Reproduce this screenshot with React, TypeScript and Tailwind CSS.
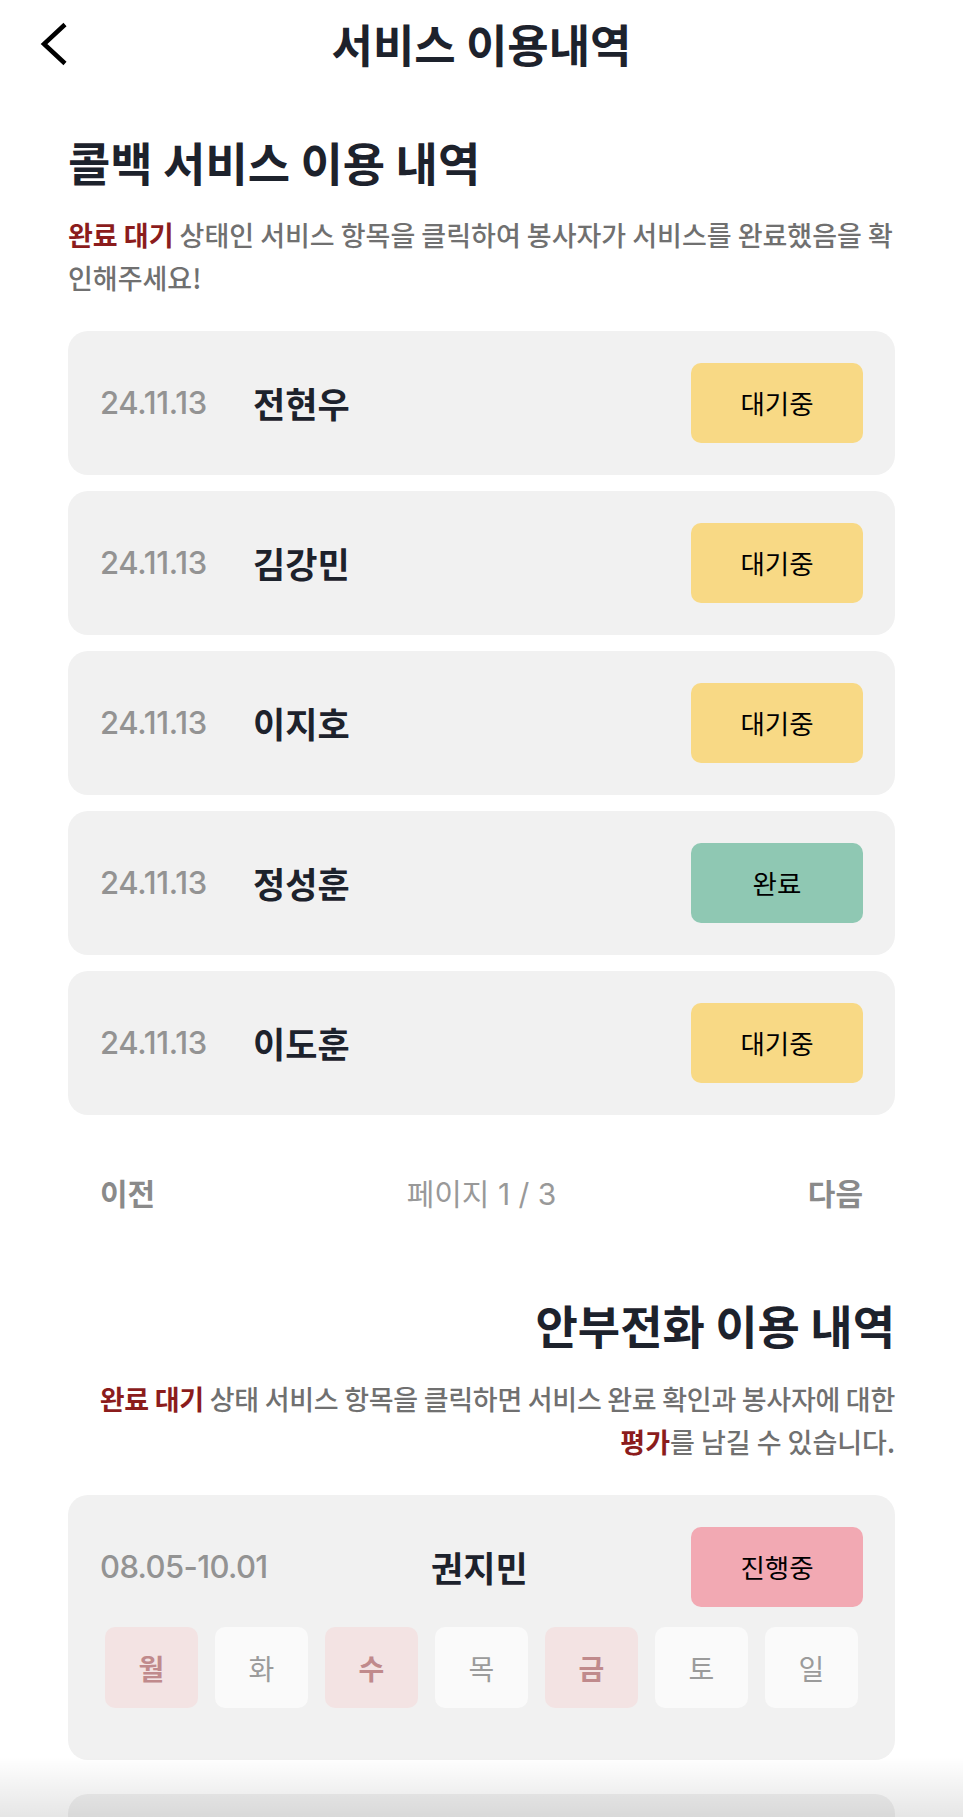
import React from "react";

type Item = { date: string; name: string; status: "wait" | "done" };

const items: Item[] = [
  { date: "24.11.13", name: "전현우", status: "wait" },
  { date: "24.11.13", name: "김강민", status: "wait" },
  { date: "24.11.13", name: "이지호", status: "wait" },
  { date: "24.11.13", name: "정성훈", status: "done" },
  { date: "24.11.13", name: "이도훈", status: "wait" },
];

const days = [
  { d: "월", on: true },
  { d: "화", on: false },
  { d: "수", on: true },
  { d: "목", on: false },
  { d: "금", on: true },
  { d: "토", on: false },
  { d: "일", on: false },
];

function CallbackCard({ item }: { item: Item }) {
  return (
    <li className="flex h-[144px] items-center rounded-[20px] bg-[#f1f1f1] pl-8 pr-8">
      <span className="w-[153px] font-['Inter','Noto_Sans_CJK_KR',sans-serif] text-[31px] font-medium tracking-[-0.01em] text-[#939393]">
        {item.date}
      </span>
      <span className="text-[35px] font-bold text-[#1d222c]">{item.name}</span>
      {item.status === "wait" ? (
        <span className="ml-auto flex h-20 w-[172px] items-center justify-center rounded-[10px] bg-[#f8d985] text-[26.5px] text-black">
          대기중
        </span>
      ) : (
        <span className="ml-auto flex h-20 w-[172px] items-center justify-center rounded-[10px] bg-[#8fc8b3] text-[26.5px] text-black">
          완료
        </span>
      )}
    </li>
  );
}

function CareCard() {
  return (
    <div className="rounded-[20px] bg-[#f1f1f1] px-8 pb-[52px] pt-8">
      <div className="flex h-20 items-center justify-between">
        <span className="font-['Inter','Noto_Sans_CJK_KR',sans-serif] text-[31px] font-medium tracking-[-0.02em] text-[#939393]">
          08.05-10.01
        </span>
        <span className="text-[35px] font-bold text-[#1d222c]">권지민</span>
        <span className="flex h-20 w-[172px] items-center justify-center rounded-[10px] bg-[#f2a9b3] text-[26.5px] text-black">
          진행중
        </span>
      </div>
      <div className="mt-5 grid h-[81px] grid-cols-7 gap-[17px] px-[5px]">
        {days.map((x) =>
          x.on ? (
            <span
              key={x.d}
              className="flex items-center justify-center rounded-[10px] bg-[#f3e3e3] text-[28px] font-bold text-[#c08a8c]"
            >
              {x.d}
            </span>
          ) : (
            <span
              key={x.d}
              className="flex items-center justify-center rounded-[10px] bg-[#fafafa] text-[28px] text-[#9b9b9b]"
            >
              {x.d}
            </span>
          )
        )}
      </div>
    </div>
  );
}

export default function App() {
  return (
    <div className="relative h-[1817px] overflow-hidden bg-white font-['Noto_Sans_CJK_KR',sans-serif] text-[#1d222c]">
      <header className="grid h-[86px] grid-cols-[1fr_auto_1fr] items-center">
        <div className="pl-[40px]">
          <svg width="30" height="48" viewBox="0 0 30 48" fill="none">
            <polyline
              points="25,5.5 4,25 25,44.5"
              stroke="#000"
              strokeWidth="4.5"
              strokeLinejoin="miter"
              fill="none"
            />
          </svg>
        </div>
        <h1 className="text-[45px] font-bold leading-none">서비스 이용내역</h1>
        <div />
      </header>

      <main className="px-[68px]">
        <section>
          <h2 className="mt-[50px] text-[46px] font-bold leading-[50px]">콜백 서비스 이용 내역</h2>
          <div className="mt-[27px] text-[27px] font-medium leading-[43px] text-[#707070]">
            <p className="whitespace-nowrap">
              <span className="font-bold text-[#8b1c1c]">완료 대기</span> 상태인 서비스 항목을 클릭하여 봉사자가 서비스를 완료했음을 확
            </p>
            <p className="whitespace-nowrap">인해주세요!</p>
          </div>
          <ul className="mt-8 flex flex-col gap-4">
            {items.map((it) => (
              <CallbackCard key={it.name} item={it} />
            ))}
          </ul>
          <div className="mt-[59px] flex h-10 items-center justify-between px-8 font-['Inter','Noto_Sans_CJK_KR',sans-serif] text-[#8a8a8a]">
            <span className="text-[30px] font-semibold">이전</span>
            <span className="text-[30px] text-[#999999]">페이지 1 / 3</span>
            <span className="text-[30px] font-semibold">다음</span>
          </div>
        </section>

        <section className="text-right">
          <h2 className="mt-[85px] text-[46px] font-bold leading-[50px]">안부전화 이용 내역</h2>
          <div className="mt-[28px] text-[27px] font-medium leading-[43px] text-[#707070]">
            <p className="whitespace-nowrap tracking-[-0.01em]">
              <span className="font-bold text-[#8b1c1c]">완료 대기</span> 상태 서비스 항목을 클릭하면 서비스 완료 확인과 봉사자에 대한
            </p>
            <p className="whitespace-nowrap">
              <span className="font-bold text-[#8b1c1c]">평가</span>를 남길 수 있습니다.
            </p>
          </div>
          <div className="mt-8 flex flex-col gap-[34px] text-left">
            <CareCard />
            <CareCard />
          </div>
        </section>
      </main>

      <div className="pointer-events-none absolute inset-x-0 bottom-0 h-[60px] bg-linear-to-b from-transparent to-black/10" />
    </div>
  );
}
